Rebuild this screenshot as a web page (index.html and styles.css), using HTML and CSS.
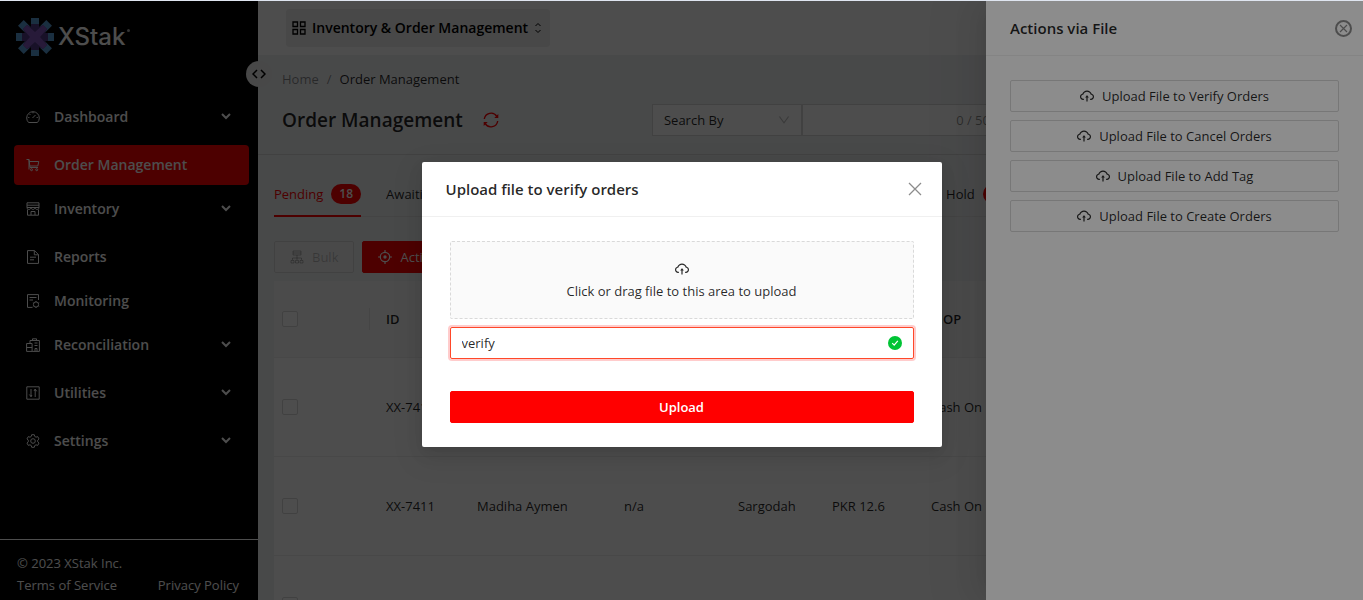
FILE: index.html
```html
<!DOCTYPE html>
<html lang="en">

<head>
    <meta charset="utf-8">
    <meta name="viewport" content="width=device-width, initial-scale=1.0">
    <title>Order Management</title>
    <link rel="stylesheet" href="styles.css">
</head>

<body>
    <svg class="sprite" aria-hidden="true">
        <symbol id="cloud" viewBox="64 64 896 896">
            <path d="M518.3 459a8 8 0 00-12.6 0l-112 141.7a7.98 7.98 0 006.3 12.9h73.9V856c0 4.4 3.6 8 8 8h60c4.4 0 8-3.6 8-8V613.7H624c6.7 0 10.4-7.7 6.3-12.9L518.3 459z" />
            <path d="M811.4 366.7C765.6 245.9 648.9 160 512.2 160S258.8 245.8 213 366.6C127.3 389.1 64 467.2 64 560c0 110.5 89.5 200 199.9 200H304c4.4 0 8-3.6 8-8v-60c0-4.4-3.6-8-8-8h-40.1c-33.7 0-65.4-13.4-89-37.7-23.5-24.2-36-56.8-34.9-90.6.9-26.4 9.9-51.2 26.2-72.1 16.7-21.3 40.1-36.8 66.1-43.7l37.9-9.9 13.9-36.6c8.6-22.8 20.6-44.1 35.7-63.4a245.6 245.6 0 0152.4-49.9c41.1-28.9 89.5-44.2 140-44.2s98.9 15.3 140 44.2c19.9 14 37.5 30.8 52.4 49.9 15.1 19.3 27.1 40.7 35.7 63.4l13.8 36.5 37.8 10C846.1 454.5 884 503.8 884 560c0 33.1-12.9 64.3-36.3 87.7a123.07 123.07 0 01-87.6 36.3H720c-4.4 0-8 3.6-8 8v60c0 4.4 3.6 8 8 8h40.1C870.5 760 960 670.5 960 560c0-92.7-63.1-170.7-148.6-193.3z" />
        </symbol>
        <symbol id="down" viewBox="64 64 896 896">
            <path d="M884 256h-75c-5.1 0-9.9 2.5-12.9 6.6L512 654.2 227.9 262.6c-3-4.1-7.8-6.6-12.9-6.6h-75c-6.5 0-10.3 7.4-6.5 12.7l352.6 486.1c12.8 17.6 39 17.6 51.7 0l352.6-486.1c3.9-5.3.1-12.7-6.4-12.7z" />
        </symbol>
        <symbol id="chevron" viewBox="0 0 10 10">
            <path d="M1 2l4 4 4-4" fill="none" stroke="currentColor" stroke-width="2" />
        </symbol>
    </svg>

    <div class="app">
        <aside class="sidebar">
            <a class="logo" href="#">
                <svg width="38" height="38" viewBox="0 0 38 38">
                    <g fill="#5a9fd8">
                        <rect x="15" y="0" width="8" height="38" />
                        <rect x="0" y="15" width="38" height="8" />
                        <rect x="15" y="-1" width="8" height="40" transform="rotate(45 19 19)" />
                        <rect x="15" y="-1" width="8" height="40" transform="rotate(-45 19 19)" />
                    </g>
                    <path d="M15 6h8v3l4-2 4 4-2 4h3v8h-3l2 4-4 4-4-2v3h-8v-3l-4 2-4-4 2-4H6v-8h3l-2-4 4-4 4 2z" fill="#533a86" />
                    <path d="M11 7l8 7 8-7 4 4-7 8 7 8-4 4-8-7-8 7-4-4 7-8-7-8z" fill="#8359bf" />
                </svg>
                <span class="logo-text">XStak</span>
                <span class="logo-dot"></span>
            </a>

            <nav class="menu">
                <button class="menu-item sub" type="button">
                    <svg class="icon" viewBox="0 0 14 14"><path d="M2.6 12.5a6.3 6.3 0 118.8 0zM6.5 8l3-3M7 2v1.300M2.200 7.500h1.200M10.600 7.500h1.200M3.500 4l.9.9" /></svg>
                    <span>Dashboard</span>
                    <svg class="chevron"><use href="#chevron" /></svg>
                </button>
                <a class="menu-item active" href="#">
                    <svg class="icon" viewBox="0 0 14 14"><path d="M.5 1.500h2.500l1 8h8M3.300 3.500h9.500l-1 4.500H4M3 1.500v10" /><circle cx="5.500" cy="11.700" r="1" /><circle cx="10.700" cy="11.700" r="1" /></svg>
                    <span>Order Management</span>
                </a>
                <button class="menu-item sub" type="button">
                    <svg class="icon" viewBox="0 0 14 14"><path d="M1 .8h12v4.700H1zM1 3.200h12M1 5.500c0 2.600 4 2.600 4 0 0 2.600 4 2.600 4 0 0 2.600 4 2.600 4 0M1.500 7.500v5.700h11V7.500M5 13V9.500h4V13" /></svg>
                    <span>Inventory</span>
                    <svg class="chevron"><use href="#chevron" /></svg>
                </button>
                <a class="menu-item" href="#">
                    <svg class="icon" viewBox="0 0 14 14"><path d="M1.500.6h7l4 4v8.800h-11zM8.300.6v4.200h4.200M4 7.200h6M4 9.800h4" /></svg>
                    <span>Reports</span>
                </a>
                <a class="menu-item" href="#">
                    <svg class="icon" viewBox="0 0 14 14"><path d="M6.500 13.400h-5V.6h11V6M3.500 3.500h7M3.500 6h3.500" /><circle cx="10" cy="10.500" r="2.600" /><path d="M10 7v1M10 13v1M6.900 8.700l.9.600M12.200 11.700l1 .6M6.900 12.300l.9-.6M12.200 9.300l1-.6" /></svg>
                    <span>Monitoring</span>
                </a>
                <button class="menu-item sub" type="button">
                    <svg class="icon" viewBox="0 0 14 14"><path d="M.6 5.500h5.500v7.900H.6zM6.100 13.400h7.300V2.500H4v3M.6 9.500h5.500M6.500 2.500V.8h4v1.700M8.500 5h3M8.500 7.500h3M9 13v-2.500h2V13" /></svg>
                    <span>Reconciliation</span>
                    <svg class="chevron"><use href="#chevron" /></svg>
                </button>
                <button class="menu-item sub" type="button">
                    <svg class="icon" viewBox="0 0 14 14"><path d="M.8.8h12.400v12.400H.8zM5 3v8M3.300 8.500L5 10.500l1-1.500M9.200 3v8M8 5l1.200-2 1.500 2.300" /></svg>
                    <span>Utilities</span>
                    <svg class="chevron"><use href="#chevron" /></svg>
                </button>
                <button class="menu-item sub" type="button">
                    <svg class="icon" viewBox="0 0 14 14"><circle cx="7" cy="7" r="2.300" /><path d="M5.700.7h2.600l.4 1.700 1.300.8 1.700-.6 1.300 2.300L11.700 6.200v1.600l1.300 1.300-1.300 2.300-1.700-.6-1.300.8-.4 1.700H5.700l-.4-1.700-1.300-.8-1.700.6L1 9.100l1.300-1.300V6.200L1 4.900l1.300-2.300 1.700.6 1.300-.8z" /></svg>
                    <span>Settings</span>
                    <svg class="chevron"><use href="#chevron" /></svg>
                </button>
            </nav>

            <footer class="legal">
                <p>© 2023 XStak Inc.</p>
                <div class="legal-links">
                    <a href="#">Terms of Service</a>
                    <a href="#">Privacy Policy</a>
                </div>
            </footer>
            <button class="collapse" type="button" aria-label="Collapse menu">
                <svg width="14" height="10" viewBox="0 0 14 10"><path d="M5 1L1 5l4 4M9 1l4 4-4 4" fill="none" stroke="currentColor" stroke-width="1.500" /></svg>
            </button>
        </aside>

        <main class="main">
            <header class="topbar">
                <button class="switcher" type="button">
                    <svg width="14" height="14" viewBox="0 0 14 14"><path d="M1 1h4.500v4.500H1zM8.500 1H13v4.500H8.500zM1 8.500h4.500V13H1zM8.500 8.500H13V13H8.500z" fill="none" stroke="currentColor" stroke-width="1.300" /></svg>
                    <span>Inventory &amp; Order Management</span>
                    <svg width="8" height="12" viewBox="0 0 8 12"><path d="M1.500 4L4 1.500 6.500 4M1.500 8L4 10.500 6.500 8" fill="none" stroke="currentColor" /></svg>
                </button>
            </header>

            <section class="page-header">
                <nav class="breadcrumb">
                    <a href="#">Home</a>
                    <span class="slash">/</span>
                    <span>Order Management</span>
                </nav>
                <div class="title-row">
                    <h1>Order Management</h1>
                    <button class="refresh" type="button" aria-label="Refresh">
                        <svg width="16" height="16" viewBox="0 0 16 16"><path d="M1.300 7a6.800 6.800 0 0112.500-2.600M14.700 9a6.800 6.800 0 01-12.500 2.600" fill="none" stroke="currentColor" stroke-width="1.400" /><path d="M15.300 2v4h-4zM.7 14v-4h4z" fill="currentColor" /></svg>
                    </button>
                    <div class="search">
                        <div class="search-by">
                            <select aria-label="Search by">
                                <option>Search By</option>
                            </select>
                            <svg class="down"><use href="#down" /></svg>
                        </div>
                        <div class="search-text">
                            <input type="text" aria-label="Search">
                            <span>0 / 50</span>
                        </div>
                    </div>
                </div>
            </section>

            <section class="content">
                <div class="tabs">
                    <button class="tab selected" type="button">Pending <span class="badge">18</span></button>
                    <button class="tab tab-wide" type="button">Awaiting</button>
                    <button class="tab" type="button">Hold <span class="badge">2</span></button>
                </div>

                <div class="toolbar">
                    <button class="btn" type="button" disabled>
                        <svg width="14" height="14" viewBox="0 0 14 14"><path d="M3 1h8v4H3zM3 3h8M7 5v3M2.500 10V8h9v2M7 8v2M1 10.500h3V13H1zM5.500 10.500h3V13h-3zM10 10.500h3V13h-3z" fill="none" stroke="currentColor" /></svg>
                        Bulk
                    </button>
                    <button class="btn primary" type="button">
                        <svg width="14" height="14" viewBox="0 0 14 14"><circle cx="7" cy="7" r="4.700" fill="none" stroke="currentColor" stroke-width="1.200" /><circle cx="7" cy="7" r="1.700" fill="currentColor" /><path d="M7 0v3M7 11v3M0 7h3M11 7h3" stroke="currentColor" stroke-width="1.200" /></svg>
                        Actions
                    </button>
                </div>

                <table class="orders">
                    <colgroup>
                        <col class="c-check">
                        <col class="c-id">
                        <col class="c-name">
                        <col class="c-tag">
                        <col class="c-city">
                        <col class="c-amount">
                        <col>
                    </colgroup>
                    <thead>
                        <tr>
                            <th class="check"><input type="checkbox" aria-label="Select all"></th>
                            <th>ID</th>
                            <th>Customer</th>
                            <th>Tags</th>
                            <th>City</th>
                            <th>Amount</th>
                            <th>MOP</th>
                        </tr>
                    </thead>
                    <tbody>
                        <tr>
                            <td class="check"><input type="checkbox" aria-label="Select order"></td>
                            <td>XX-7412</td>
                            <td></td>
                            <td></td>
                            <td></td>
                            <td></td>
                            <td>Cash On Delivery</td>
                        </tr>
                        <tr>
                            <td class="check"><input type="checkbox" aria-label="Select XX-7411"></td>
                            <td>XX-7411</td>
                            <td>Madiha Aymen</td>
                            <td>n/a</td>
                            <td>Sargodah</td>
                            <td>PKR 12.6</td>
                            <td>Cash On Delivery</td>
                        </tr>
                        <tr>
                            <td class="check"><input type="checkbox" aria-label="Select order"></td>
                            <td></td>
                            <td></td>
                            <td></td>
                            <td></td>
                            <td></td>
                            <td></td>
                        </tr>
                    </tbody>
                </table>
            </section>
        </main>

        <div class="mask"></div>
        <aside class="drawer">
            <header class="panel-header">
                <h2>Actions via File</h2>
                <button class="close" type="button" aria-label="Close">
                    <svg width="17" height="17" viewBox="0 0 17 17"><circle cx="8.500" cy="8.500" r="7.500" fill="none" stroke="currentColor" stroke-width="2" /><path d="M5 5l7 7M12 5l-7 7" stroke="currentColor" stroke-width="1.200" /></svg>
                </button>
            </header>
            <div class="drawer-body">
                <button class="btn" type="button"><svg class="cloud"><use href="#cloud" /></svg>Upload File to Verify Orders</button>
                <button class="btn" type="button"><svg class="cloud"><use href="#cloud" /></svg>Upload File to Cancel Orders</button>
                <button class="btn" type="button"><svg class="cloud"><use href="#cloud" /></svg>Upload File to Add Tag</button>
                <button class="btn" type="button"><svg class="cloud"><use href="#cloud" /></svg>Upload File to Create Orders</button>
            </div>
        </aside>

        <div class="mask modal-wrap">
            <div class="modal" role="dialog" aria-labelledby="modal-title">
                <header class="panel-header">
                    <h2 id="modal-title">Upload file to verify orders</h2>
                    <button class="close" type="button" aria-label="Close">
                        <svg width="14" height="14" viewBox="0 0 14 14"><path d="M1 1l12 12M13 1L1 13" stroke="currentColor" stroke-width="1.300" /></svg>
                    </button>
                </header>
                <form class="modal-body">
                    <label class="dropzone">
                        <input type="file">
                        <svg class="cloud"><use href="#cloud" /></svg>
                        <span>Click or drag file to this area to upload</span>
                    </label>
                    <div class="confirm">
                        <input type="text" value="verify" aria-label="Confirmation">
                        <svg width="14" height="14" viewBox="0 0 14 14"><circle cx="7" cy="7" r="7" fill="#00c435" /><path d="M4.200 7.200l2 2 3.600-4.400" fill="none" stroke="#fff" stroke-width="1.200" /></svg>
                    </div>
                    <button class="btn primary" type="button">Upload</button>
                </form>
            </div>
        </div>
    </div>
</body>

</html>
```

FILE: styles.css
```css
* {
    box-sizing: border-box;
}

body {
    margin: 0;
    border-top: 1px solid #dfe5f0;
    background: #000;
    color: rgba(0, 0, 0, .85);
    font: 13px/22px "Segoe UI", "Open Sans", sans-serif;
}

h1,
h2,
p {
    margin: 0;
}

a {
    color: inherit;
    text-decoration: none;
}

button,
input,
select {
    font: inherit;
    color: inherit;
}

button {
    border: none;
    background: none;
    padding: 0;
}

svg {
    flex: none;
}

.sprite {
    display: none;
}

.app {
    position: relative;
    display: flex;
    height: calc(100vh - 1px);
    overflow: hidden;
}

/* sidebar */

.sidebar {
    position: relative;
    display: flex;
    flex-direction: column;
    flex: none;
    width: 258px;
    background: #000;
    color: #fff;
}

.logo {
    display: flex;
    align-items: center;
    height: 72px;
    padding-left: 16px;
}

.logo-text {
    margin-left: 4px;
    font: 500 24px/30px Inter, sans-serif;
}

.logo-dot {
    width: 3px;
    height: 3px;
    margin: 0 0 14px 2px;
    border-radius: 50%;
    background: #aaa;
}

.menu {
    display: flex;
    flex-direction: column;
    padding: 24px 9px 0 14px;
}

.menu-item {
    display: flex;
    align-items: center;
    height: 40px;
    margin-bottom: 4px;
    padding: 0 18px 0 12px;
    border-radius: 4px;
    font-size: 14px;
    font-weight: 600;
    text-align: left;
}

.menu-item.sub {
    margin-bottom: 8px;
}

.menu-item.active {
    background: #f00;
}

.menu-item span {
    flex: 1;
}

.icon {
    width: 14px;
    height: 14px;
    margin-right: 14px;
    fill: none;
    stroke: currentColor;
}

.chevron {
    width: 10px;
    height: 10px;
}

.legal {
    margin-top: auto;
    padding: 12px 19px 4px 17px;
    border-top: 1px solid #fff;
}

.legal-links {
    display: flex;
    justify-content: space-between;
}

.collapse {
    position: absolute;
    top: 60px;
    right: -14px;
    display: flex;
    align-items: center;
    justify-content: center;
    width: 26px;
    height: 26px;
    border-radius: 50%;
    background: #eee;
    color: #000;
}

/* page */

.main {
    flex: 1;
    min-width: 0;
    background: #f0f2f5;
}

.topbar {
    height: 54px;
    padding: 8px 28px;
    background: #fff;
}

.switcher {
    display: flex;
    align-items: center;
    gap: 6px;
    height: 38px;
    padding: 0 8px 0 6px;
    border-radius: 4px;
    background: #eee;
    color: #000;
    font-size: 14px;
    font-weight: 600;
}

.page-header {
    padding: 13px 24px 12px;
    border-bottom: 1px solid #d9d9d9;
}

.breadcrumb {
    display: flex;
    gap: 8px;
}

.breadcrumb a,
.slash {
    color: rgba(0, 0, 0, .45);
}

.title-row {
    display: flex;
    align-items: center;
    height: 44px;
    margin-top: 8px;
}

h1 {
    font-size: 19px;
    line-height: 32px;
    font-weight: 600;
}

.refresh {
    display: flex;
    margin-left: 20px;
    color: #f00;
}

.search {
    display: flex;
    flex: none;
    width: 65%;
    margin-left: auto;
}

.search-by,
.search-text {
    position: relative;
    display: flex;
    align-items: center;
    width: 150px;
    height: 32px;
    border: 1px solid #d9d9d9;
    background: #fff;
}

.search-text {
    width: 200px;
    padding-right: 11px;
    color: rgba(0, 0, 0, .45);
}

.search-by select,
.search-text input {
    flex: 1;
    min-width: 0;
    height: 30px;
    padding: 0 11px;
    border: none;
    background: none;
    appearance: none;
}

.down {
    position: absolute;
    right: 11px;
    width: 12px;
    height: 12px;
    fill: rgba(0, 0, 0, .25);
}

.content {
    padding: 17px 16px 0;
}

.tabs {
    display: flex;
    gap: 25px;
    border-bottom: 1px solid #e4e4e4;
}

.tab {
    display: flex;
    align-items: center;
    gap: 8px;
    height: 45px;
    margin-bottom: -1px;
    border-bottom: 2px solid transparent;
}

.tab.selected {
    color: #f00;
    border-color: #f00;
}

.tab-wide {
    flex: 0 0 535px;
}

.badge {
    padding: 0 8px;
    border-radius: 10px;
    background: #f00;
    color: #fff;
    font-size: 12px;
    line-height: 20px;
    font-weight: 600;
}

.toolbar {
    display: flex;
    gap: 8px;
    margin: 24px 0 8px;
}

.btn {
    display: flex;
    align-items: center;
    justify-content: center;
    gap: 8px;
    height: 32px;
    padding: 0 15px;
    border: 1px solid #d9d9d9;
    border-radius: 2px;
    background: #fff;
}

.btn:disabled {
    background: #f5f5f5;
    color: rgba(0, 0, 0, .25);
}

.btn.primary {
    border-color: #f00;
    background: #f00;
    color: #fff;
    font-weight: 600;
}

.toolbar .btn.primary {
    font-weight: 400;
}

.orders {
    width: 100%;
    table-layout: fixed;
    border-collapse: separate;
    border-spacing: 0;
    background: #fff;
}

.c-check {
    width: 96px;
}

.c-id {
    width: 91px;
}

.c-name {
    width: 147px;
}

.c-tag {
    width: 114px;
}

.c-city {
    width: 94px;
}

.c-amount {
    width: 99px;
}

.orders th,
.orders td {
    height: 99px;
    padding: 0 16px;
    border-bottom: 1px solid #f0f0f0;
    text-align: left;
}

.orders th {
    height: 77px;
    background: #fafafa;
    font-weight: 600;
}

.orders .check {
    padding: 0 0 0 8px;
}

th.check {
    background: linear-gradient(#e8e8e8, #e8e8e8) right center / 1px 22px no-repeat #fafafa;
}

.check input {
    display: block;
    width: 16px;
    height: 16px;
    margin: 0;
    border: 1px solid #d9d9d9;
    border-radius: 2px;
    background: #fff;
    appearance: none;
}

/* overlays */

.mask {
    position: absolute;
    inset: 0;
    background: rgba(0, 0, 0, .45);
}

.drawer {
    position: absolute;
    top: 0;
    right: 0;
    bottom: 0;
    width: 377px;
    background: #fff;
    box-shadow: -6px 0 16px -8px rgba(0, 0, 0, .08), -9px 0 28px rgba(0, 0, 0, .05), -12px 0 48px 16px rgba(0, 0, 0, .03);
}

.panel-header {
    display: flex;
    align-items: center;
    justify-content: space-between;
    height: 55px;
    padding: 0 20px 0 24px;
    border-bottom: 1px solid #f0f0f0;
}

.drawer .panel-header {
    padding-right: 11px;
}

h2 {
    font-size: 15px;
    line-height: 22px;
    font-weight: 600;
}

.close {
    display: flex;
    color: rgba(0, 0, 0, .45);
}

.drawer-body {
    display: flex;
    flex-direction: column;
    gap: 8px;
    padding: 24px;
}

.cloud {
    width: 14px;
    height: 14px;
    fill: currentColor;
}

.modal-wrap {
    display: flex;
    align-items: flex-start;
    justify-content: center;
    padding-top: 161px;
}

.modal {
    width: 520px;
    max-width: 100%;
    border-radius: 2px;
    background: #fff;
    box-shadow: 0 3px 6px -4px rgba(0, 0, 0, .12), 0 6px 16px rgba(0, 0, 0, .08), 0 9px 28px 8px rgba(0, 0, 0, .05);
}

.modal-body {
    display: flex;
    flex-direction: column;
    gap: 8px;
    padding: 24px 28px;
}

.dropzone {
    display: flex;
    flex-direction: column;
    align-items: center;
    gap: 4px;
    padding: 20px 0 16px;
    border: 1px dashed #d9d9d9;
    border-radius: 2px;
    background: #fafafa;
}

.dropzone input {
    display: none;
}

.confirm {
    display: flex;
    align-items: center;
    height: 32px;
    margin-bottom: 24px;
    padding-right: 11px;
    border: 1px solid #ff4829;
    border-radius: 2px;
    box-shadow: 0 0 0 2px rgba(255, 0, 0, .2);
}

.confirm input {
    flex: 1;
    padding: 0 11px;
    border: none;
    outline: none;
    background: none;
}
```
